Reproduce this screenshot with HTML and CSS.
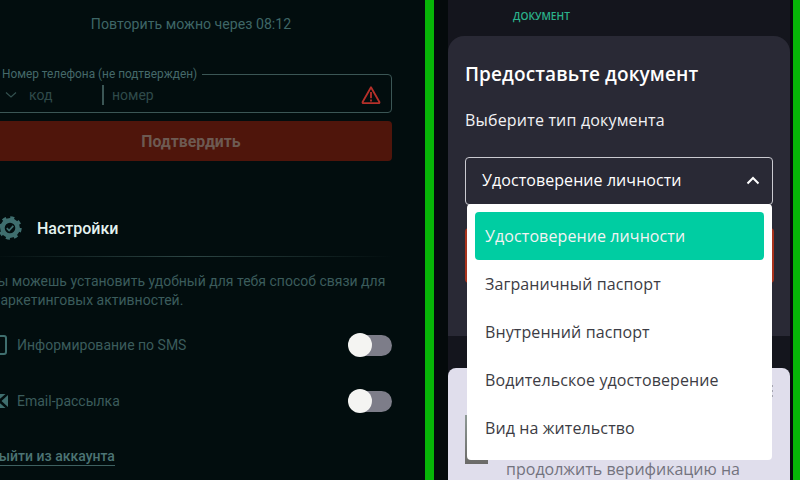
FILE: index.html
```html
<!DOCTYPE html>
<html lang="ru">
<head>
<meta charset="utf-8">
<title>Верификация</title>
<link rel="stylesheet" href="styles.css">
</head>
<body>
<div class="screen">
  <section class="left">
    <div class="left-inner">
      <p class="retry">Повторить можно через 08:12</p>
      <div class="phone-field">
        <span class="legend">Номер телефона (не подтвержден)</span>
        <svg class="chev" width="12" height="8" viewBox="0 0 12 8"><path d="M1 1.500l5 4.500 5-4.500" fill="none" stroke="#33504f" stroke-width="1.200"/></svg>
        <span class="code">код</span>
        <span class="sep"></span>
        <span class="number">номер</span>
        <svg class="warn" width="20" height="20" viewBox="0 0 20 20"><path d="M10 2.200L18.400 17a.8.8 0 0 1-.7 1.200H2.300a.8.8 0 0 1-.7-1.200z" fill="none" stroke="#b5302a" stroke-width="1.800" stroke-linejoin="round"/><path d="M10 7v6.200M10 14.600v1.800" stroke="#b5302a" stroke-width="1.800"/></svg>
      </div>
      <div class="confirm">Подтвердить</div>
      <div class="settings-head">
        <svg class="gear" width="24" height="24" viewBox="0 0 24 24"><circle cx="12" cy="12" r="7.600" fill="none" stroke="#3f6e6e" stroke-width="4.600"/><circle cx="12" cy="12" r="10.200" fill="none" stroke="#3f6e6e" stroke-width="3" stroke-dasharray="4 4"/><path d="M8.800 12.200l2.300 2.300 4.200-4.600" fill="none" stroke="#3f6e6e" stroke-width="1.700"/></svg>
        <span class="settings-title">Настройки</span>
      </div>
      <div class="rule"></div>
      <p class="desc">Ты можешь установить удобный для тебя способ связи для маркетинговых активностей.</p>
      <div class="opt">
        <svg class="opt-icon" width="18" height="20" viewBox="0 0 18 20"><rect x="2" y="1" width="14" height="18" rx="2" fill="none" stroke="#3f6e6e" stroke-width="2"/></svg>
        <span class="opt-text">Информирование по SMS</span>
        <span class="toggle"><span class="knob"></span></span>
      </div>
      <div class="opt">
        <svg class="opt-icon" width="18" height="16" viewBox="0 0 18 16"><path d="M18 2v12l-6.500-6zM0 1h15.500L8 7.500 0 7zM0 15h15.500L8 8.500 0 9z" fill="#3f6e6e"/></svg>
        <span class="opt-text">Email-рассылка</span>
        <span class="toggle"><span class="knob"></span></span>
      </div>
      <a class="logout">Выйти из аккаунта</a>
    </div>
  </section>
  <section class="phone">
    <div class="sheet">
      <div class="steps">ДОКУМЕНТ</div>
      <div class="card">
        <h1 class="card-title">Предоставьте документ</h1>
        <p class="card-label">Выберите тип документа</p>
        <div class="select">
          <span>Удостоверение личности</span>
          <svg width="14" height="9" viewBox="0 0 14 9"><path d="M1.500 7.500L7 2l5.500 5.500" fill="none" stroke="#fff" stroke-width="2"/></svg>
        </div>
        <div class="submit"></div>
      </div>
      <div class="notice">
        <div class="thumb"></div>
        <span class="dots"></span>
        <p class="notice-text">продолжить верификацию на</p>
      </div>
      <ul class="menu">
        <li class="item active">Удостоверение личности</li>
        <li class="item">Заграничный паспорт</li>
        <li class="item">Внутренний паспорт</li>
        <li class="item">Водительское удостоверение</li>
        <li class="item">Вид на жительство</li>
      </ul>
    </div>
  </section>
</div>
</body>
</html>
```

FILE: styles.css
```css
* { box-sizing: border-box; }
html, body { margin: 0; padding: 0; }
body { width: 800px; height: 480px; overflow: hidden; background: #07b507; }
p, h1, ul { margin: 0; padding: 0; }
.screen { display: flex; gap: 9px; width: 800px; height: 480px; overflow: hidden; }

.left { width: 425px; height: 480px; flex: none; background: #020d0e; overflow: hidden; font-family: Roboto, sans-serif; }
.left-inner { width: 402px; margin-left: -10px; display: flex; flex-direction: column; padding-top: 15px; }
.retry { font-size: 14.150px; line-height: 17px; margin-top: 1px; text-align: center; color: #3e6666; }
.phone-field { position: relative; margin-top: 41px; height: 39px; border: 1px solid #3b5655; border-radius: 4px; display: flex; align-items: center; padding: 2px 0 0 14px; }
.legend { position: absolute; left: 0; top: -8px; padding: 0 5px 0 11px; background: #020d0e; font-size: 11.850px; line-height: 14px; color: #45696a; white-space: nowrap; }
.chev { flex: none; }
.code { margin-left: 12px; width: 73px; font-size: 14px; color: #2f4a4a; }
.sep { width: 2px; height: 20px; background: #3b5655; flex: none; }
.number { margin-left: 8px; font-size: 14px; color: #2f4a4a; }
.warn { margin-left: auto; margin-right: 10px; }
.confirm { margin-top: 8px; height: 40px; border-radius: 4px; background: #4f150b; display: flex; align-items: center; justify-content: center; font-size: 15.800px; font-weight: 700; color: #6d5a52; }
.settings-head { display: flex; align-items: center; margin-top: 55px; height: 24px; padding-left: 8px; }
.gear { flex: none; }
.settings-title { margin-left: 15px; font-size: 16px; font-weight: 500; color: #e4f2f0; }
.rule { margin-top: 16px; height: 1px; background: linear-gradient(90deg, transparent, #2d4544 50%, transparent); }
.desc { margin-top: 15px; font-size: 14px; line-height: 19px; color: #3b5c5c; }
.opt { display: flex; align-items: center; height: 24px; margin-top: 32px; }
.desc + .opt { margin-top: 23px; }
.opt-icon { flex: none; width: 18px; }
.opt-text { margin-left: 9px; font-size: 14px; color: #3b5c5c; }
.toggle { position: relative; margin-left: auto; width: 32px; height: 21px; border-radius: 0 11px 11px 0; background: #7d7d89; }
.knob { position: absolute; left: -12px; top: -2px; width: 24px; height: 24px; border-radius: 50%; background: #f4f4f2; }
.logout { align-self: flex-start; margin-top: 35px; font-size: 14px; font-weight: 500; line-height: 17px; color: #4c7474; border-bottom: 1px solid #3e6060; }

.phone { width: 359px; height: 480px; flex: none; background: #040a0b; padding-left: 14px; padding-right: 3px; }
.sheet { position: relative; height: 480px; background: #14151d; font-family: "Open Sans", sans-serif; overflow: hidden; }
.steps { height: 36px; padding: 9px 0 0 65px; font-size: 10.200px; font-weight: 600; line-height: 14px; color: #2bb28c; }
.card { height: 300px; border-radius: 16px 16px 0 0; background: #292935; padding: 24px 17px 0; }
.card-title { font-size: 19px; font-weight: 600; line-height: 28px; letter-spacing: .1px; color: #fff; }
.card-label { margin-top: 22px; font-size: 16px; line-height: 20px; letter-spacing: .18px; color: #f2f2f4; }
.select { margin-top: 27px; height: 48px; border: 1px solid #c9c9d0; border-radius: 4px; display: flex; align-items: center; justify-content: space-between; padding: 0 12px 2px 16px; font-size: 16px; letter-spacing: .07px; color: #fff; }
.submit { margin-top: 23px; height: 55px; width: 309px; background: #a8321c; border-radius: 4px; }
.notice { position: relative; margin-top: 32px; height: 112px; border-radius: 8px 8px 0 0; background: #e0deec; }
.thumb { position: absolute; left: 17px; top: 47px; width: 23px; height: 49px; background: linear-gradient(180deg, #8f9a96, #6b6a68); }
.dots { position: absolute; right: 17px; top: 17px; width: 2px; height: 14px; background: repeating-linear-gradient(180deg, #a5a5b0 0 2px, transparent 2px 5px); }
.notice-text { position: absolute; left: 0; right: 0; top: 91px; padding-left: 8px; text-align: center; font-size: 16px; line-height: 20px; color: #73737e; white-space: nowrap; }
.menu { position: absolute; left: 19px; top: 204px; width: 305px; height: 256px; padding: 8px; background: #fff; border-radius: 4px; list-style: none; }
.item { height: 48px; padding-left: 10px; display: flex; align-items: center; font-size: 16px; letter-spacing: .1px; color: #3c3c44; border-radius: 4px; }
.item.active { background: #00cda2; color: #f3f3f3; }
```
